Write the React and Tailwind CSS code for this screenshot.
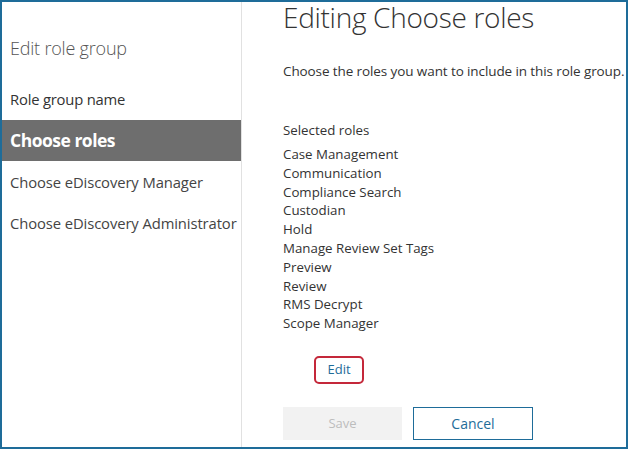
export default function App() {
  const roles = [
    "Case Management",
    "Communication",
    "Compliance Search",
    "Custodian",
    "Hold",
    "Manage Review Set Tags",
    "Preview",
    "Review",
    "RMS Decrypt",
    "Scope Manager",
  ];
  return (
    <div
      className="w-[628px] h-[449px] border-2 border-[#1e6c99] bg-white flex overflow-hidden"
      style={{ fontFamily: '"Open Sans", "Noto Sans", sans-serif' }}
    >
      <div className="w-[240px] shrink-0 border-r border-[#e1e1e1] flex flex-col">
        <div className="pl-[8px] pt-[33px] h-[77px] text-[18px] text-[#555] font-light tracking-[-0.2px]">
          Edit role group
        </div>
        <div className="h-[41px] flex items-center pl-[8px] text-[14.8px] text-[#333] font-medium tracking-[-0.2px]">
          Role group name
        </div>
        <div className="h-[41px] flex items-center pl-[8px] bg-[#6e6e6e] text-white text-[17.5px] font-bold tracking-[-0.5px] w-[239px]">
          Choose roles
        </div>
        <div className="h-[42px] flex items-center pl-[8px] text-[14.8px] text-[#444] font-medium tracking-[-0.1px]">
          Choose eDiscovery Manager
        </div>
        <div className="h-[41px] flex items-center pl-[8px] text-[14.8px] text-[#444] font-medium tracking-[-0.1px]">
          Choose eDiscovery Administrator
        </div>
      </div>
      <div className="flex-1 pl-[41px] flex flex-col">
        <div className="text-[28px] font-light text-[#333] leading-[31px] tracking-[-0.3px]">
          Editing Choose roles
        </div>
        <div className="mt-[29px] text-[13.5px] text-[#333] leading-[18px] tracking-[-0.1px] whitespace-nowrap">
          Choose the roles you want to include in this role group.
        </div>
        <div className="mt-[41px] text-[13.3px] text-[#333] leading-[18px]">
          Selected roles
        </div>
        <div className="mt-[6px] flex flex-col">
          {roles.map((r) => (
            <div key={r} className="text-[13.3px] text-[#333] leading-[18.8px]">
              {r}
            </div>
          ))}
        </div>
        <div className="mt-[23px] ml-[31px] w-[50px] h-[28px] rounded-[5px] border-2 border-[#c4283a] flex items-center justify-center text-[13px] text-[#1e6c99]">
          Edit
        </div>
        <div className="mt-[23px] flex gap-[11px]">
          <div className="w-[119px] h-[33px] bg-[#f2f2f2] flex items-center justify-center text-[13px] text-[#bdbdbd]">
            Save
          </div>
          <div className="w-[120px] h-[33px] border border-[#1e6c99] flex items-center justify-center text-[14px] text-[#1e6c99]">
            Cancel
          </div>
        </div>
      </div>
    </div>
  );
}
